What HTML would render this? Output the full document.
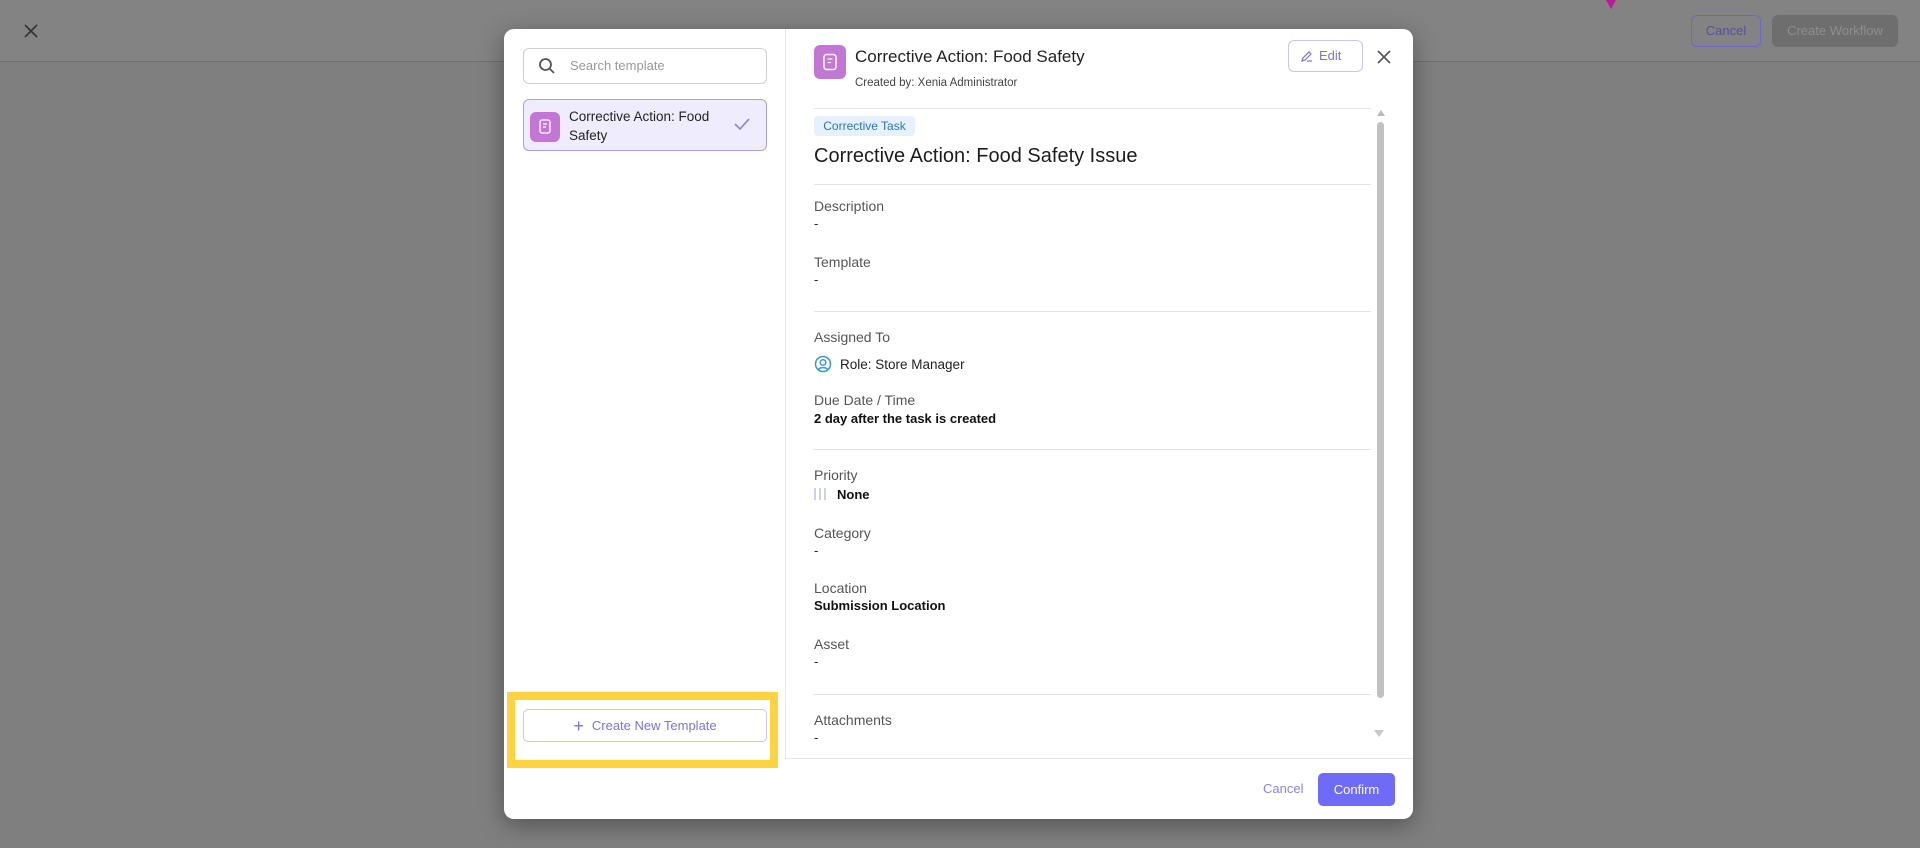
<!DOCTYPE html>
<html><head><meta charset="utf-8"><style>
*{box-sizing:border-box;margin:0;padding:0}
body{width:1920px;height:848px;background:#7f7f7f;font-family:"Liberation Sans",sans-serif;position:relative;overflow:hidden}
.a{position:absolute}
.topbar{left:0;top:0;width:1920px;height:62px;background:#838383;border-bottom:1px solid #6f6f6f}
.modal{left:504px;top:29px;width:909px;height:790px;background:#fff;border-radius:10px;box-shadow:0 6px 24px rgba(0,0,0,.35)}
.lbl{position:absolute;left:814px;font-size:14px;color:#555}
.val{position:absolute;left:814px;font-size:13px;color:#222}
.b{font-weight:bold;color:#111}
.hr{position:absolute;left:814px;width:557px;height:1px;background:#e3e3e3}
</style></head><body>
<div class="a topbar"></div>
<svg class="a" style="left:24px;top:24px" width="14" height="14" viewBox="0 0 14 14"><path d="M1 1l12 12M13 1L1 13" stroke="#333" stroke-width="1.6"/></svg>
<div class="a" style="left:1691px;top:15px;width:70px;height:32px;border:1px solid #6d67c9;border-radius:6px;color:#534fa6;font-size:13px;text-align:center;line-height:30px">Cancel</div>
<div class="a" style="left:1772px;top:15px;width:126px;height:32px;background:#6e6e6e;border-radius:6px;color:#8e8e8e;font-size:13px;text-align:center;line-height:32px">Create Workflow</div>
<div class="a" style="left:1606px;top:0;width:0;height:0;border-left:5px solid transparent;border-right:5px solid transparent;border-top:9px solid #c0189c"></div>

<div class="a modal"></div>
<div class="a" style="left:785px;top:29px;width:1px;height:729px;background:#e6e6e6"></div>
<div class="a" style="left:785px;top:758px;width:628px;height:1px;background:#e6e6e6"></div>

<div class="a" style="left:523px;top:48px;width:244px;height:36px;border:1px solid #cfcfcf;border-radius:6px"></div>
<svg class="a" style="left:538px;top:57px" width="18" height="18" viewBox="0 0 18 18"><circle cx="7.5" cy="7.5" r="5.5" fill="none" stroke="#555" stroke-width="1.8"/><path d="M11.5 11.5L16 16" stroke="#555" stroke-width="1.8"/></svg>
<div class="a" style="left:570px;top:58px;font-size:13px;color:#999">Search template</div>

<div class="a" style="left:523px;top:99px;width:244px;height:52px;background:#efedfd;border:1.5px solid #a79ff0;border-radius:6px"></div>
<div class="a" style="left:530px;top:112px;width:30px;height:30px;background:#c277d4;border-radius:6px"></div>
<svg class="a" style="left:538px;top:119px" width="14" height="16" viewBox="0 0 14 16"><rect x="2" y="1" width="10" height="13" rx="2" fill="none" stroke="#fff" stroke-width="1.3"/><path d="M5 5h4M5 8h3" stroke="#fff" stroke-width="1.2"/></svg>
<div class="a" style="left:569px;top:107px;font-size:13.5px;color:#222;line-height:19px">Corrective Action: Food<br>Safety</div>
<svg class="a" style="left:733px;top:116px" width="18" height="16" viewBox="0 0 18 16"><path d="M2 8l5 5L16 3" fill="none" stroke="#8a80ea" stroke-width="1.6"/></svg>

<div class="a" style="left:507px;top:692px;width:271px;height:76px;border:8px solid #ffd23f"></div>
<div class="a" style="left:523px;top:709px;width:244px;height:33px;border:1px solid #c9c5f3;border-radius:5px;color:#7b73e6;font-size:13px;text-align:center;line-height:31px"><span style="font-size:18px;vertical-align:-2px;margin-right:8px">+</span>Create New Template</div>

<div class="a" style="left:814px;top:45px;width:32px;height:34px;background:#c277d4;border-radius:6px"></div>
<svg class="a" style="left:821px;top:53px" width="18" height="19" viewBox="0 0 18 19"><rect x="3" y="1.5" width="12" height="15" rx="2.5" fill="none" stroke="#fff" stroke-width="1.4"/><path d="M6.5 6h5M6.5 9.5h3.5" stroke="#fff" stroke-width="1.3"/></svg>
<div class="a" style="left:855px;top:47px;font-size:17px;color:#222">Corrective Action: Food Safety</div>
<div class="a" style="left:855px;top:77px;font-size:11.5px;color:#444">Created by: Xenia Administrator</div>
<div class="a" style="left:1288px;top:40px;width:75px;height:32px;border:1px solid #c9c5f3;border-radius:6px;color:#7b73e6;font-size:13px;line-height:30px;padding-left:30px">Edit</div>
<svg class="a" style="left:1300px;top:49px" width="14" height="14" viewBox="0 0 14 14"><path d="M2 12l1-3 6-6 2 2-6 6z" fill="none" stroke="#7b73e6" stroke-width="1.2"/><path d="M7 12h5" stroke="#7b73e6" stroke-width="1.2"/></svg>
<svg class="a" style="left:1377px;top:50px" width="14" height="14" viewBox="0 0 14 14"><path d="M1 1l12 12M13 1L1 13" stroke="#555" stroke-width="1.6"/></svg>

<div class="hr" style="top:108px"></div>
<div class="a" style="left:1377px;top:110px;width:0;height:0;border-left:4px solid transparent;border-right:4px solid transparent;border-bottom:6px solid #bbb"></div>
<div class="a" style="left:1377px;top:122px;width:7px;height:576px;background:#c1c1c1;border-radius:4px"></div>
<div class="a" style="left:1374px;top:730px;width:0;height:0;border-left:5px solid transparent;border-right:5px solid transparent;border-top:7px solid #c8c8c8"></div>

<div class="a" style="left:814px;top:116px;width:101px;height:20px;background:#e6f1fd;border-radius:4px;color:#2f74c0;font-size:12px;text-align:center;line-height:20px">Corrective Task</div>
<div class="a" style="left:814px;top:145px;font-size:20px;color:#1d1d1d">Corrective Action: Food Safety Issue</div>
<div class="hr" style="top:184px"></div>
<div class="lbl" style="top:198px">Description</div><div class="val" style="top:216px">-</div>
<div class="lbl" style="top:254px">Template</div><div class="val" style="top:272px">-</div>
<div class="hr" style="top:311px"></div>
<div class="lbl" style="top:329px">Assigned To</div>
<svg class="a" style="left:814px;top:355px" width="18" height="18" viewBox="0 0 18 18"><circle cx="9" cy="9" r="7.5" fill="none" stroke="#3a97d4" stroke-width="1.5"/><circle cx="9" cy="7.5" r="2.8" fill="none" stroke="#3a97d4" stroke-width="1.4"/><path d="M4.5 14.5c1.5-2.5 7.5-2.5 9 0" fill="none" stroke="#3a97d4" stroke-width="1.4"/></svg>
<div class="val" style="left:840px;top:357px;font-size:13.5px">Role: Store Manager</div>
<div class="lbl" style="top:392px">Due Date / Time</div>
<div class="val b" style="top:411px">2 day after the task is created</div>
<div class="hr" style="top:449px"></div>
<div class="lbl" style="top:467px">Priority</div>
<div class="a" style="left:814px;top:488px;width:2px;height:12px;background:#cdd0e8"></div>
<div class="a" style="left:819px;top:488px;width:2px;height:12px;background:#cdd0e8"></div>
<div class="a" style="left:824px;top:488px;width:2px;height:12px;background:#cdd0e8"></div>
<div class="val b" style="left:837px;top:487px">None</div>
<div class="lbl" style="top:525px">Category</div><div class="val" style="top:543px">-</div>
<div class="lbl" style="top:580px">Location</div>
<div class="val b" style="top:598px">Submission Location</div>
<div class="lbl" style="top:636px">Asset</div><div class="val" style="top:654px">-</div>
<div class="hr" style="top:694px"></div>
<div class="lbl" style="top:712px">Attachments</div><div class="val" style="top:730px">-</div>

<div class="a" style="left:1263px;top:781px;font-size:13px;color:#8a82e8">Cancel</div>
<div class="a" style="left:1318px;top:773px;width:77px;height:33px;background:#6f6af8;border-radius:5px;color:#fff;font-size:13px;text-align:center;line-height:33px">Confirm</div>
</body></html>
